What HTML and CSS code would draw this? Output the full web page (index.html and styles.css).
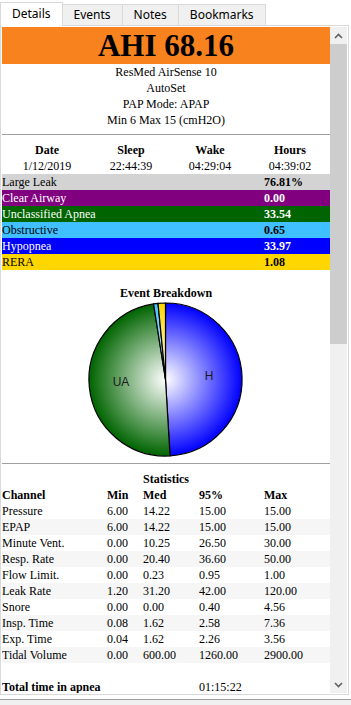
FILE: index.html
```html
<!DOCTYPE html>
<html lang="en">
<head>
    <meta charset="UTF-8">
    <meta name="viewport" content="width=device-width, initial-scale=1.0">
    <title>Daily Details</title>
    <link rel="stylesheet" href="styles.css">
</head>
<body>
    <div class="tabs">
        <div class="tab active">Details</div>
        <div class="tab">Events</div>
        <div class="tab">Notes</div>
        <div class="tab">Bookmarks</div>
    </div>

    <div class="panel">
        <div class="view">
            <div class="ahi">AHI 68.16</div>
            <div class="machine">
                <div>ResMed AirSense 10</div>
                <div>AutoSet</div>
                <div>PAP Mode: APAP</div>
                <div>Min 6 Max 15 (cmH2O)</div>
            </div>
            <hr>

            <div class="times">
                <b>Date</b><b>Sleep</b><b>Wake</b><b>Hours</b>
                <span>1/12/2019</span><span>22:44:39</span><span>04:29:04</span><span>04:39:02</span>
            </div>

            <div class="events">
                <div class="event ev-leak"><span>Large Leak</span><b>76.81%</b></div>
                <div class="event ev-ca"><span>Clear Airway</span><b>0.00</b></div>
                <div class="event ev-ua"><span>Unclassified Apnea</span><b>33.54</b></div>
                <div class="event ev-oa"><span>Obstructive</span><b>0.65</b></div>
                <div class="event ev-h"><span>Hypopnea</span><b>33.97</b></div>
                <div class="event ev-rera"><span>RERA</span><b>1.08</b></div>
            </div>

            <div class="section-title chart-title">Event Breakdown</div>
            <svg class="pie" width="328" height="160" viewBox="0 0 328 160">
                <defs>
                    <radialGradient id="gH" gradientUnits="userSpaceOnUse" cx="163.5" cy="78.5" r="76.5">
                        <stop offset="0" stop-color="#ffffff"/>
                        <stop offset="1" stop-color="#0000ff"/>
                    </radialGradient>
                    <radialGradient id="gUA" gradientUnits="userSpaceOnUse" cx="163.5" cy="78.5" r="76.5">
                        <stop offset="0" stop-color="#ffffff"/>
                        <stop offset="1" stop-color="#006400"/>
                    </radialGradient>
                    <radialGradient id="gOA" gradientUnits="userSpaceOnUse" cx="163.5" cy="78.5" r="76.5">
                        <stop offset="0" stop-color="#ffffff"/>
                        <stop offset="1" stop-color="#40c0ff"/>
                    </radialGradient>
                    <radialGradient id="gRE" gradientUnits="userSpaceOnUse" cx="163.5" cy="78.5" r="76.5">
                        <stop offset="0" stop-color="#ffffff"/>
                        <stop offset="1" stop-color="#ffd700"/>
                    </radialGradient>
                </defs>
                <g stroke="#000" stroke-width="1.2" stroke-linejoin="round">
                    <path fill="url(#gH)" d="M163.5 78.5 L163.5 2 A76.5 76.5 0 0 1 168.04 154.87 Z"/>
                    <path fill="url(#gUA)" d="M163.5 78.5 L168.04 154.87 A76.5 76.5 0 0 1 151.53 2.94 Z"/>
                    <path fill="url(#gOA)" d="M163.5 78.5 L151.53 2.94 A76.5 76.5 0 0 1 156.03 2.37 Z"/>
                    <path fill="url(#gRE)" d="M163.5 78.5 L156.03 2.37 A76.5 76.5 0 0 1 163.5 2 Z"/>
                </g>
                <text class="pie-label" x="207" y="79" text-anchor="middle">H</text>
                <text class="pie-label" x="119" y="85" text-anchor="middle">UA</text>
            </svg>
            <hr class="after-chart">

            <div class="section-title">Statistics</div>
            <div class="stats">
                <div class="stat-row head"><b>Channel</b><b>Min</b><b>Med</b><b>95%</b><b>Max</b></div>
                <div class="stat-row"><span>Pressure</span><span>6.00</span><span>14.22</span><span>15.00</span><span>15.00</span></div>
                <div class="stat-row alt"><span>EPAP</span><span>6.00</span><span>14.22</span><span>15.00</span><span>15.00</span></div>
                <div class="stat-row"><span>Minute Vent.</span><span>0.00</span><span>10.25</span><span>26.50</span><span>30.00</span></div>
                <div class="stat-row alt"><span>Resp. Rate</span><span>0.00</span><span>20.40</span><span>36.60</span><span>50.00</span></div>
                <div class="stat-row"><span>Flow Limit.</span><span>0.00</span><span>0.23</span><span>0.95</span><span>1.00</span></div>
                <div class="stat-row alt"><span>Leak Rate</span><span>1.20</span><span>31.20</span><span>42.00</span><span>120.00</span></div>
                <div class="stat-row"><span>Snore</span><span>0.00</span><span>0.00</span><span>0.40</span><span>4.56</span></div>
                <div class="stat-row alt"><span>Insp. Time</span><span>0.08</span><span>1.62</span><span>2.58</span><span>7.36</span></div>
                <div class="stat-row"><span>Exp. Time</span><span>0.04</span><span>1.62</span><span>2.26</span><span>3.56</span></div>
                <div class="stat-row alt"><span>Tidal Volume</span><span>0.00</span><span>600.00</span><span>1260.00</span><span>2900.00</span></div>
                <div class="stat-row total"><b class="total-label">Total time in apnea</b><span>01:15:22</span></div>
            </div>
        </div>

        <div class="scrollbar">
            <div class="sb-btn">
                <svg width="9" height="6" viewBox="0 0 9 6"><path d="M1 5 L4.5 1.5 L8 5" fill="none" stroke="#606060" stroke-width="1.6"/></svg>
            </div>
            <div class="sb-track"><div class="sb-thumb"></div></div>
            <div class="sb-btn">
                <svg width="9" height="6" viewBox="0 0 9 6"><path d="M1 1 L4.5 4.5 L8 1" fill="none" stroke="#606060" stroke-width="1.6"/></svg>
            </div>
        </div>
    </div>

    <div class="footer"></div>
</body>
</html>
```

FILE: styles.css
```css
body {
    margin: 0;
    background-color: white;
    font-family: 'Liberation Serif', 'Times New Roman', serif;
    font-size: 12px;
    color: #000;
}
.tabs {
    display: flex;
    align-items: flex-end;
    height: 25px;
    font-family: 'Noto Sans', 'Liberation Sans', sans-serif;
    font-size: 12px;
}
.tab {
    box-sizing: border-box;
    height: 21px;
    line-height: 19px;
    padding: 0 11px;
    margin-left: -1px;
    background-color: #f0f0f0;
    border: 1px solid #d9d9d9;
    border-bottom: none;
}
.tab.active {
    position: relative;
    z-index: 1;
    height: 24px;
    margin-left: 0;
    margin-bottom: -1px;
    padding: 0 11px;
    line-height: 22px;
    background-color: white;
}
.panel {
    box-sizing: border-box;
    display: flex;
    width: 349px;
    height: 670px;
    padding: 1px;
    border: 1px solid #d9d9d9;
}
.view {
    flex: 1;
    overflow: hidden;
    line-height: 16px;
}
.ahi {
    height: 37px;
    line-height: 37px;
    background-color: #f7821e;
    text-align: center;
    font-size: 31px;
    font-weight: bold;
}
.machine {
    text-align: center;
}
hr {
    height: 0;
    margin: 6px 0 7px;
    border: none;
    border-top: 1px solid #a0a0a0;
}
hr.after-chart {
    margin: 2px 0 7px;
}
.times {
    display: grid;
    grid-template-columns: 90px 78px 80px 80px;
    text-align: center;
}
.event {
    display: grid;
    grid-template-columns: 262px 1fr;
}
.ev-leak { background-color: #d3d3d3; }
.ev-ca { background-color: #800080; color: white; }
.ev-ua { background-color: #006400; color: white; }
.ev-oa { background-color: #40c0ff; }
.ev-h { background-color: #0000ff; color: white; }
.ev-rera { background-color: #ffd700; }
.section-title {
    text-align: center;
    font-weight: bold;
}
.chart-title {
    margin-top: 15px;
}
.pie {
    display: block;
}
.pie-label {
    font-family: 'Liberation Sans', Arial, sans-serif;
    font-size: 12px;
    fill: #1a1a1a;
}
.stat-row {
    display: grid;
    grid-template-columns: 105px 36px 56px 65px 1fr;
}
.stat-row.alt {
    background-color: #f6f6f6;
}
.stat-row.total {
    margin-top: 16px;
}
.total-label {
    grid-column: 1 / 4;
}
.scrollbar {
    display: flex;
    flex-direction: column;
    width: 17px;
    background-color: #f0f0f0;
}
.sb-btn {
    display: flex;
    align-items: center;
    justify-content: center;
    height: 17px;
}
.sb-track {
    flex: 1;
}
.sb-thumb {
    height: 300px;
    background-color: #cdcdcd;
}
.footer {
    height: 6px;
    margin-top: 4px;
    border-top: 1px solid #a0a0a0;
    background-color: #f0f0f0;
}
```
